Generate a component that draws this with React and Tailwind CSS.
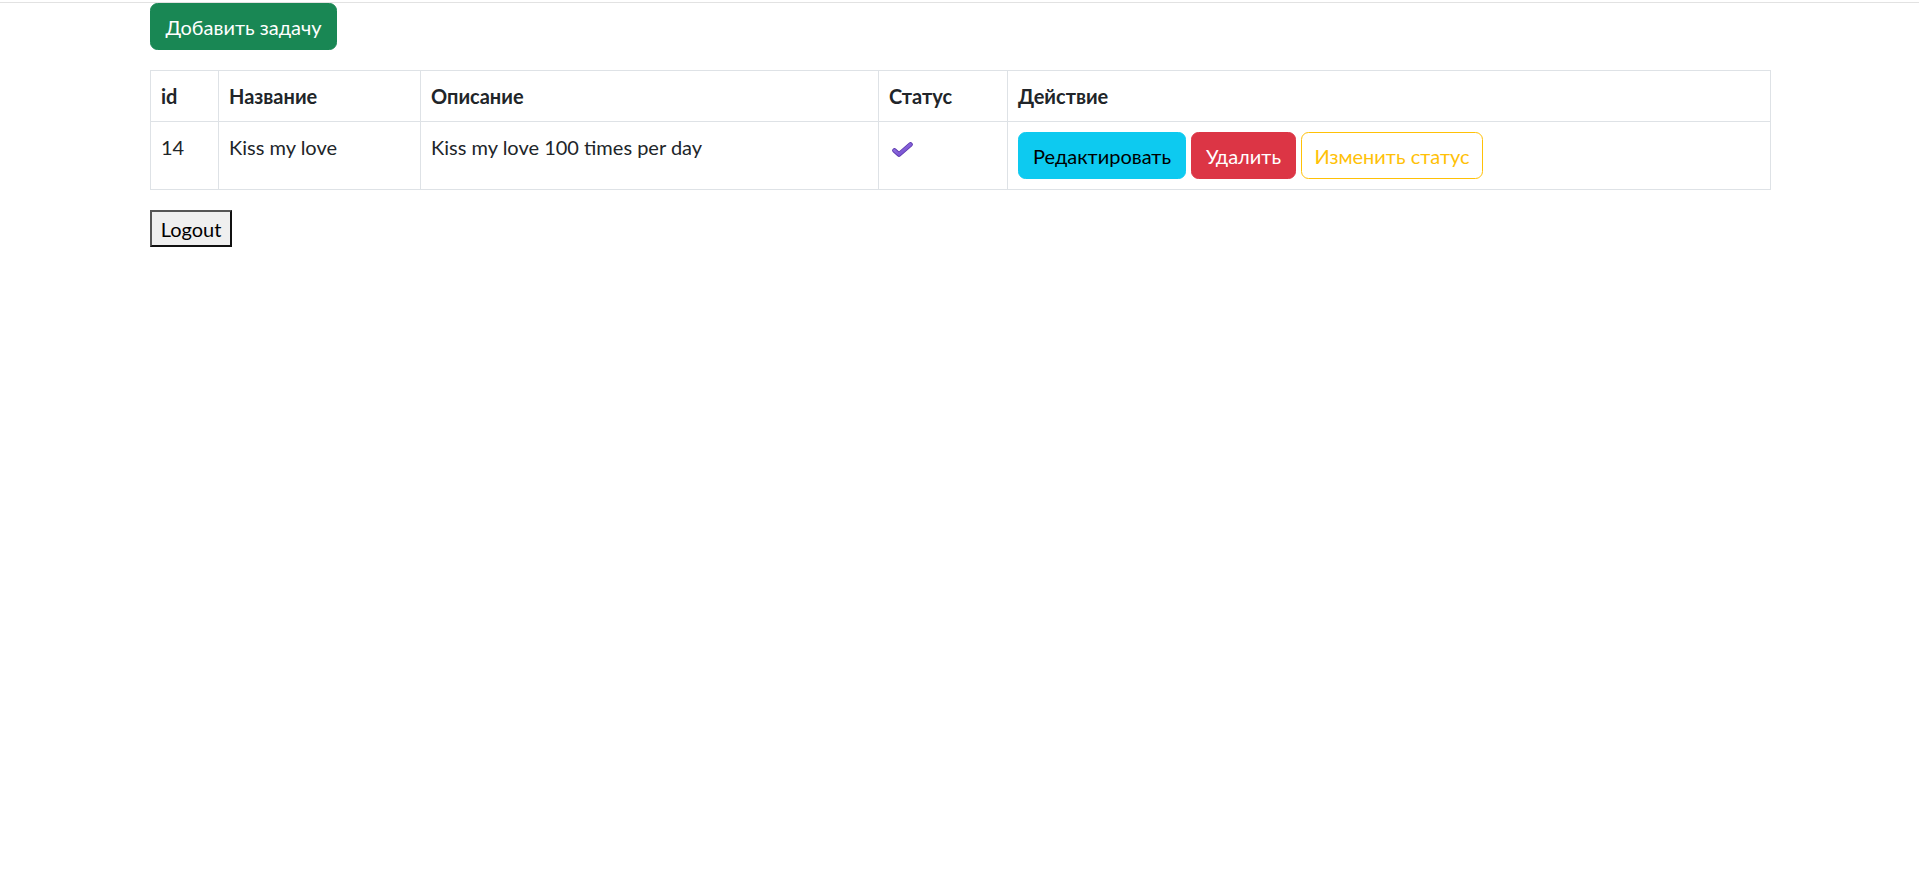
const FONT = "font-['Lato','Liberation_Sans',sans-serif]";

const COLS = [68, 202, 458, 129, 763];

function Check() {
  return (
    <svg width="21" height="15" viewBox="0 0 21 15" className="inline-block align-middle ml-[3px]">
      <defs>
        <linearGradient id="chk" x1="0" y1="0" x2="1" y2="1">
          <stop offset="0" stopColor="#9b7be6" />
          <stop offset="1" stopColor="#6c43c9" />
        </linearGradient>
      </defs>
      <polyline
        points="2.5,8.5 7,12.5 18.5,2.5"
        fill="none"
        stroke="#5a36ad"
        strokeWidth="4.6"
        strokeLinecap="round"
        strokeLinejoin="round"
      />
      <polyline
        points="2.5,8.5 7,12.5 18.5,2.5"
        fill="none"
        stroke="url(#chk)"
        strokeWidth="3"
        strokeLinecap="round"
        strokeLinejoin="round"
      />
    </svg>
  );
}

export default function App() {
  return (
    <div className={`min-h-screen bg-white text-[#212529] text-[20px] leading-[30px] ${FONT}`}>
      <div className="h-[2px]" />
      <div className="border-t border-[#e2e2e2]" />
      <div className="px-[150px]">
        <button className="h-[47px] w-[187px] rounded-[7.5px] border border-[#198754] bg-[#198754] text-white text-[20px] leading-[30px]">
          Добавить задачу
        </button>

        <table className="mt-[20px] w-[1620px] table-fixed border-collapse border border-[#dee2e6]">
          <colgroup>
            {COLS.map((w, i) => (
              <col key={i} style={{ width: w }} />
            ))}
          </colgroup>
          <thead>
            <tr>
              {["id", "Название", "Описание", "Статус", "Действие"].map((h) => (
                <th key={h} className="border border-[#dee2e6] p-[10px] text-left align-top font-bold">
                  {h}
                </th>
              ))}
            </tr>
          </thead>
          <tbody>
            <tr>
              <td className="border border-[#dee2e6] p-[10px] align-top">14</td>
              <td className="border border-[#dee2e6] p-[10px] align-top">Kiss my love</td>
              <td className="border border-[#dee2e6] p-[10px] align-top">Kiss my love 100 times per day</td>
              <td className="border border-[#dee2e6] p-[10px] align-top">
                <Check />
              </td>
              <td className="border border-[#dee2e6] p-[10px] align-top">
                <div className="flex gap-[5px]">
                  <button className="h-[47px] w-[168px] rounded-[7.5px] border border-[#0dcaf0] bg-[#0dcaf0] text-black">
                    Редактировать
                  </button>
                  <button className="h-[47px] w-[105px] rounded-[7.5px] border border-[#dc3545] bg-[#dc3545] text-white">
                    Удалить
                  </button>
                  <button className="h-[47px] w-[182px] rounded-[7.5px] border border-[#ffc107] bg-white text-[#ffc107]">
                    Изменить статус
                  </button>
                </div>
              </td>
            </tr>
          </tbody>
        </table>

        <button className="mt-[20px] h-[37px] w-[82px] border-[2px] border-t-[#555] border-l-[#555] border-r-[#111] border-b-[#111] bg-[#efefef] text-black text-[20px] leading-[30px]">
          Logout
        </button>
      </div>
    </div>
  );
}
